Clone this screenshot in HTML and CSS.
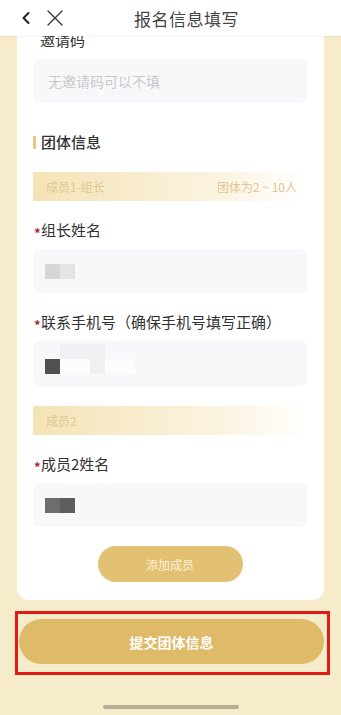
FILE: index.html
```html
<!DOCTYPE html>
<html lang="zh-CN">
<head>
    <meta charset="UTF-8">
    <meta name="viewport" content="width=device-width, initial-scale=1.0">
    <title>报名信息填写</title>
    <link rel="stylesheet" href="styles.css">
</head>
<body>

<div class="nav-bar">
    <div class="nav-icons">
        <svg class="nav-back" width="12" height="14" viewBox="0 0 12 14">
            <path d="M8.5 2 L3.5 7 L8.5 12" fill="none" stroke="#222" stroke-width="2" stroke-linecap="round" stroke-linejoin="round"/>
        </svg>
        <svg class="nav-close" width="18" height="18" viewBox="0 0 18 18">
            <path d="M2 2 L16 16 M16 2 L2 16" fill="none" stroke="#333" stroke-width="1.3" stroke-linecap="round"/>
        </svg>
    </div>
    <div class="nav-title">报名信息填写</div>
</div>

<div class="page">
    <div class="form-card">
        <div class="field-label first">邀请码</div>
        <div class="field-input"><span class="placeholder">无邀请码可以不填</span></div>

        <div class="section-title">团体信息</div>

        <div class="member-bar">
            <span>成员1-组长</span>
            <span>团体为2 ~ 10人</span>
        </div>

        <div class="field-label"><span class="required">*</span>组长姓名</div>
        <div class="field-input">
            <div class="blur-row">
                <span class="blur-block light"></span><span class="blur-block lighter"></span>
            </div>
        </div>

        <div class="field-label"><span class="required">*</span>联系手机号（确保手机号填写正确）</div>
        <div class="field-input phone">
            <div class="blur-row faint">
                <span class="blur-block ghost"></span><span class="blur-block ghost"></span><span class="blur-block ghost"></span>
            </div>
            <div class="blur-row">
                <span class="blur-block dark"></span><span class="blur-block white"></span><span class="blur-block white"></span><span class="blur-block ghost"></span><span class="blur-block white"></span><span class="blur-block white"></span>
            </div>
        </div>

        <div class="member-bar">
            <span>成员2</span>
        </div>

        <div class="field-label"><span class="required">*</span>成员2姓名</div>
        <div class="field-input">
            <div class="blur-row">
                <span class="blur-block mid"></span><span class="blur-block mid2"></span>
            </div>
        </div>

        <div class="add-row">
            <button class="add-member">添加成员</button>
        </div>
    </div>

    <div class="submit-frame">
        <button class="submit-btn">提交团体信息</button>
    </div>

    <div class="home-bar"></div>
</div>

</body>
</html>
```

FILE: styles.css
```css
body {
    margin: 0;
    background-color: #f6ebca;
    font-family: "Noto Sans CJK SC", "Noto Sans", sans-serif;
    color: #323233;
}
.nav-bar {
    position: relative;
    z-index: 2;
    height: 36px;
    background-color: white;
    display: flex;
    align-items: center;
    box-shadow: 0 1px 1px rgba(0, 0, 0, 0.04);
}
.nav-icons {
    display: flex;
    align-items: center;
    gap: 14px;
    padding-left: 20px;
    width: 100px;
}
.nav-title {
    font-size: 17px;
    color: #444;
    margin-left: 14px;
    letter-spacing: 0.5px;
}
.page {
    height: 679px;
    overflow: hidden;
}
.form-card {
    margin: 0 17px;
    background-color: white;
    border-radius: 0 0 12px 12px;
    padding: 0 17px 18px 16px;
}
.field-label {
    font-size: 15px;
    line-height: 20px;
    height: 20px;
    margin-top: 19px;
}
.field-label.first {
    margin-top: -6px;
    padding-left: 7px;
}
.required {
    display: inline-block;
    color: #a82a34;
    font-size: 13px;
    font-weight: bold;
    line-height: 1;
    width: 7px;
    margin-left: 1px;
    vertical-align: -2px;
}
.field-input {
    margin-top: 9px;
    height: 44px;
    background-color: #f7f8fa;
    border-radius: 6px;
    display: flex;
    flex-direction: column;
    justify-content: center;
    padding-left: 12px;
}
.placeholder {
    font-size: 14px;
    color: #c8c9cc;
    padding-left: 3px;
}
.blur-row {
    display: flex;
    height: 15px;
    filter: blur(0.6px);
}
.blur-block {
    display: block;
    width: 15px;
    height: 15px;
}
.blur-block.light { background-color: #d6d6d9; }
.blur-block.lighter { background-color: #e4e4e7; }
.blur-block.dark { background-color: #505053; }
.blur-block.white { background-color: #fcfcfd; }
.blur-block.ghost { background-color: #f0f0f2; }
.blur-block.mid { background-color: #6d6d70; }
.blur-block.mid2 { background-color: #5e5e61; }
.field-input.phone {
    justify-content: flex-start;
    padding-top: 3px;
    height: 42px;
}
.blur-row.faint {
    height: 13px;
    margin-left: 15px;
    margin-bottom: 2px;
}
.section-title {
    margin-top: 29px;
    font-size: 15px;
    font-weight: 500;
    line-height: 20px;
    display: flex;
    align-items: center;
}
.section-title::before {
    content: "";
    width: 3px;
    height: 13px;
    background-color: #e6c77e;
    border-radius: 1px;
    margin-right: 5px;
}
.member-bar {
    margin-top: 20px;
    height: 29px;
    background: linear-gradient(to right, #f4e3b6, #fbf4e1 70%, #ffffff);
    display: flex;
    align-items: center;
    justify-content: space-between;
    padding: 0 10px 0 13px;
    font-size: 12px;
    color: #dfc796;
}
.add-row {
    display: flex;
    justify-content: center;
    margin-top: 19px;
}
.add-member {
    width: 145px;
    height: 36px;
    border: none;
    border-radius: 18px;
    background-color: #e3c172;
    color: #fbefd5;
    font-family: inherit;
    font-size: 12px;
}
.submit-frame {
    box-sizing: border-box;
    margin: 11px 11px 0 15px;
    height: 64px;
    border: 3px solid #e01b14;
    padding: 5px 3px 0 1px;
}
.submit-btn {
    display: block;
    width: 100%;
    height: 45px;
    border: none;
    border-radius: 23px;
    background-color: #dfba68;
    color: white;
    font-family: inherit;
    font-size: 14px;
    font-weight: bold;
}
.home-bar {
    width: 136px;
    height: 4px;
    border-radius: 2px;
    background-color: #b9ae95;
    margin: 30px auto 0 auto;
}
```
